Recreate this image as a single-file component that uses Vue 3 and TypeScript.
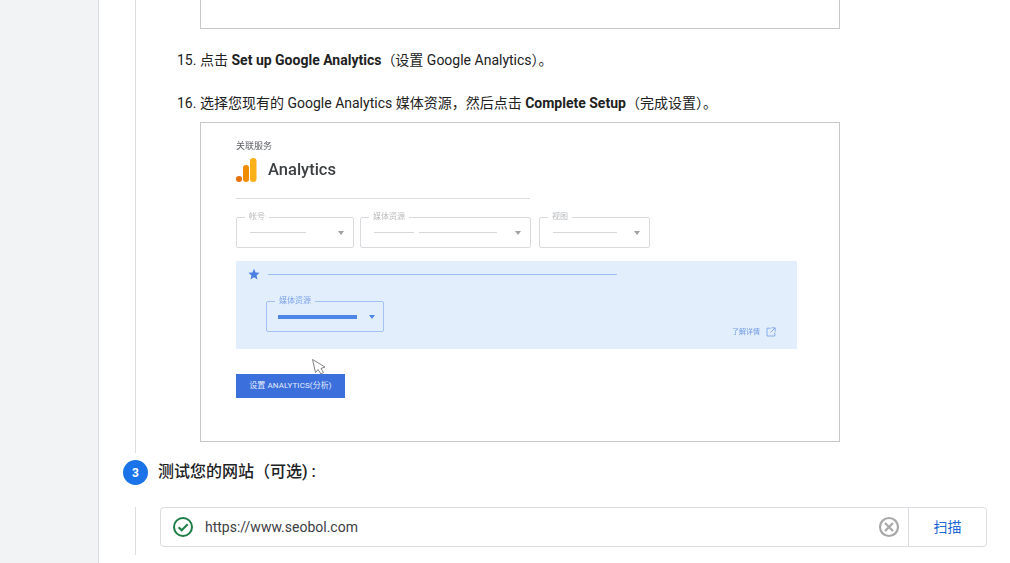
<script setup lang="ts">
interface Sel { label: string; width: number; bars: number[] }
const selects: Sel[] = [
  { label: '帐号', width: 118, bars: [56] },
  { label: '媒体资源', width: 171, bars: [40, 78] },
  { label: '视图', width: 111, bars: [64] },
]
</script>

<template>
  <div class="page">
    <aside class="side"></aside>
    <main class="main">
      <section class="rail first">
        <div class="shot-top"></div>
        <div class="item"><span class="num">15.</span><span>点击 <b>Set up Google Analytics</b>（设置 Google Analytics）。</span></div>
        <div class="item second"><span class="num">16.</span><span>选择您现有的 Google Analytics 媒体资源，然后点击 <b>Complete Setup</b>（完成设置）。</span></div>
        <div class="shot">
          <div class="mock">
            <div class="crumb">关联服务</div>
            <div class="brand">
              <svg width="21" height="24" viewBox="0 0 21 24">
                <circle cx="3" cy="21" r="3" fill="#e8710a"/>
                <rect x="7" y="7" width="6" height="17" rx="3" fill="#f08c00"/>
                <rect x="14" y="0" width="6.5" height="24" rx="3.2" fill="#fbb017"/>
              </svg>
              <span>Analytics</span>
            </div>
            <div class="rule"></div>
            <div class="sels">
              <div v-for="s in selects" :key="s.label" class="sel" :style="{ width: s.width + 'px' }">
                <span class="legend">{{ s.label }}</span>
                <span v-for="(b, i) in s.bars" :key="i" class="bar" :style="{ width: b + 'px' }"></span>
                <i class="caret"></i>
              </div>
            </div>
            <div class="panel">
              <div class="panel-head">
                <svg width="12" height="12" viewBox="0 0 24 24"><path fill="#4a80e0" d="M12 1.5l3.2 7.4 8 .7-6.1 5.3 1.9 7.9L12 18.6l-7 4.2 1.9-7.9L.8 9.6l8-.7z"/></svg>
                <span class="panel-line"></span>
              </div>
              <div class="panel-body">
                <div class="sel blue">
                  <span class="legend blue-l">媒体资源</span>
                  <span class="bar thick"></span>
                  <i class="caret blue-c"></i>
                </div>
                <div class="learn">
                  <span>了解详情</span>
                  <svg width="10" height="10" viewBox="0 0 10 10" fill="none" stroke="#7ba4ea" stroke-width="0.9"><path d="M4.5 1.2H1v7.8h7.8V5.5M5.5.8h3.7v3.7M9 1L4.5 5.5"/></svg>
                </div>
              </div>
            </div>
            <div class="cta-wrap">
              <svg class="cursor" width="15" height="17" viewBox="0 0 15 17"><path d="M.5.5L3.5 13.5 6 10.5 9 15 11.5 13.5 9 9.5 13 8z" fill="#fff" stroke="#777" stroke-width="0.9" stroke-linejoin="round"/></svg>
              <div class="cta">设置 ANALYTICS(分析)</div>
            </div>
          </div>
        </div>
      </section>
      <div class="step">
        <span class="badge">3</span>
        <h3>测试您的网站（可选) :</h3>
      </div>
      <section class="rail last">
        <div class="url">
          <svg class="ok" width="22" height="22" viewBox="0 0 22 22" fill="none" stroke="#1e7e45" stroke-width="2"><circle cx="11" cy="11" r="9"/><path d="M6.6 11.2l3.1 3.1 6-6"/></svg>
          <span class="txt">https://www.seobol.com</span>
          <svg class="clear" width="22" height="22" viewBox="0 0 22 22" fill="none" stroke="#a8a8a8" stroke-width="2.2"><circle cx="11" cy="11" r="9"/><path d="M7 7l8 8M15 7l-8 8"/></svg>
          <span class="scan">扫描</span>
        </div>
      </section>
    </main>
  </div>
</template>

<style>
html, body { margin: 0; overflow: hidden; background: #fff; }
</style>

<style scoped>
.page { display: flex; width: 1010px; height: 563px; overflow: hidden; background: #fff; font-family: Roboto, "Noto Sans CJK SC", sans-serif; font-size: 14px; color: #212121; }
.side { width: 98px; flex: none; background: #f1f3f4; border-right: 1px solid #dadce0; }
.main { flex: 1; padding-left: 36px; }
.rail { border-left: 1px solid #dadce0; }
.first { height: 453px; padding-left: 64px; box-sizing: border-box; }
.shot-top { width: 638px; height: 28px; border: 1px solid #c8c8c8; border-top: 0; }
.item { position: relative; line-height: 20px; margin-top: 21px; white-space: nowrap; }
.item.second { margin-top: 23px; }
.num { position: absolute; left: -23px; }
b { font-weight: 700; }
.shot { width: 638px; height: 318px; margin-top: 9px; border: 1px solid #c8c8c8; }
.mock { padding: 17px 0 0 35px; filter: blur(0.4px); }
.crumb { font-size: 9px; line-height: 12px; color: #5f6368; }
.brand { display: flex; align-items: center; gap: 11px; margin-top: 6px; font-size: 16.5px; font-weight: 500; color: #3c4043; height: 24px; }
.brand span { margin-bottom: 2px; }
.rule { width: 294px; height: 1px; background: #dadce0; margin-top: 16px; }
.sels { display: flex; gap: 6px; margin-top: 18px; height: 31px; }
.sels .sel:last-child { margin-left: 2px; }
.sel { position: relative; box-sizing: border-box; height: 31px; border: 1px solid #d8dade; border-radius: 2px; display: flex; align-items: center; gap: 5px; padding-left: 13px; }
.legend { position: absolute; top: -6px; left: 8px; padding: 0 4px; background: #fff; font-size: 8px; line-height: 10px; color: #b8babd; }
.bar { height: 1px; background: #d5d7da; }
.caret { position: absolute; right: 9px; top: 13px; width: 0; height: 0; border: 3.5px solid transparent; border-top: 4px solid #a0a3a6; border-bottom: 0; }
.panel { width: 561px; height: 88px; margin-top: 13px; background: #e3eefd; box-sizing: border-box; padding: 7px 0 0 12px; }
.panel-head { display: flex; align-items: center; gap: 8px; height: 12px; }
.panel-line { width: 349px; height: 1px; background: #9bbcef; }
.panel-body { display: flex; justify-content: space-between; align-items: flex-end; margin-top: 21px; }
.sel.blue { width: 118px; height: 31px; margin-left: 18px; border-color: #a2c0f2; padding-left: 11px; }
.legend.blue-l { background: #e3eefd; left: 8px; color: #7ba4ea; }
.bar.thick { width: 79px; height: 4px; background: #4d86e6; }
.caret.blue-c { border-top-color: #4d86e6; right: 8px; }
.learn { display: flex; align-items: center; gap: 6px; margin-right: 21px; font-size: 7px; line-height: 10px; color: #6f9be6; margin-bottom: -5px; }
.cta-wrap { position: relative; margin-top: 25px; }
.cursor { position: absolute; left: 76px; top: -15px; }
.cta { width: 109px; height: 24px; line-height: 23px; background: #3a6fdc; color: #e6edfb; font-size: 8px; letter-spacing: 0.1px; text-align: center; white-space: nowrap; }
.step { display: flex; align-items: center; gap: 10px; margin: 7px 0 0 -12px; height: 25px; }
.badge { width: 25px; height: 25px; border-radius: 50%; background: #1a73e8; color: #fff; font-size: 12px; font-weight: 700; display: flex; align-items: center; justify-content: center; }
h3 { margin: 0 0 2px; font-size: 16px; font-weight: 500; line-height: 20px; color: #202124; }
.last { margin-top: 22px; height: 48px; padding-left: 24px; }
.url { display: flex; align-items: center; box-sizing: border-box; width: 827px; height: 40px; border: 1px solid #dadce0; border-radius: 4px; padding-left: 11px; }
.ok { flex: none; }
.txt { flex: 1; margin-left: 11px; color: #3c4043; }
.clear { flex: none; margin-right: 8px; }
.scan { flex: none; width: 77px; height: 38px; line-height: 38px; border-left: 1px solid #dadce0; text-align: center; color: #1967d2; }
</style>
